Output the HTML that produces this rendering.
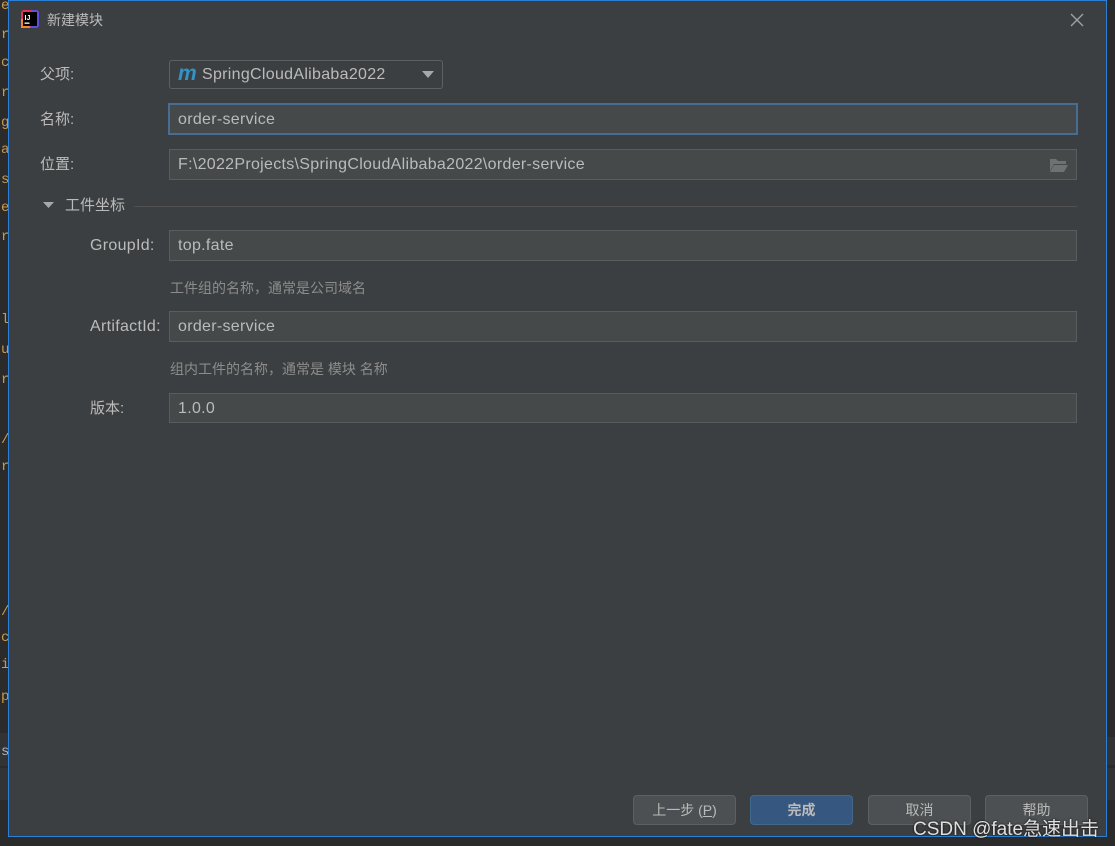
<!DOCTYPE html>
<html><head><meta charset="utf-8"><style>
*{margin:0;padding:0;box-sizing:border-box}
body{width:1115px;height:846px;background:#2b2b2b;position:relative;overflow:hidden;font-family:"Liberation Sans","Noto Sans CJK SC",sans-serif;color:#bbbbbb;font-size:15px}
.abs{position:absolute}
.code{position:absolute;left:1px;font-family:"Liberation Mono",monospace;font-size:14px;color:#cc9a4a;line-height:16px}
.dlg{position:absolute;left:8px;top:0;width:1099px;height:837px;background:#3c3f41;border:1px solid #2b7fd6}
.lbl{position:absolute;font-size:15px;color:#bbbbbb;line-height:18px}
.en{font-size:16px;letter-spacing:0.3px}
.fld{position:absolute;background:#45494a;border:1px solid #5a5d5f;color:#bbbbbb;font-size:16px;letter-spacing:0.3px;padding-left:8px;line-height:29px}
.hint{position:absolute;font-size:14px;color:#8c8c8c}
.btn{position:absolute;top:794px;height:30px;border:1px solid #5e6060;border-radius:4px;background:#4c5052;color:#bbbbbb;font-size:14px;text-align:center;line-height:28px}
</style></head><body>
<div class="code" style="top:-2px">e</div><div class="code" style="top:27px">r</div><div class="code" style="top:55px">c</div><div class="code" style="top:85px">r</div><div class="code" style="top:115px">g</div><div class="code" style="top:142px">a</div><div class="code" style="top:172px">s</div><div class="code" style="top:200px">e</div><div class="code" style="top:229px">r</div><div class="code" style="top:312px">l</div><div class="code" style="top:342px">u</div><div class="code" style="top:372px">r</div><div class="code" style="top:432px">/</div><div class="code" style="top:459px">r</div><div class="code" style="top:604px">/</div><div class="code" style="top:630px">c</div><div class="code" style="top:657px">i</div><div class="code" style="top:689px">p</div>
<div class="abs" style="left:0;top:733px;width:8px;height:33px;background:#313335"></div>
<div class="code" style="top:744px;color:#a9b7c6">s</div>
<div class="abs" style="left:0;top:768px;width:8px;height:32px;background:#313335"></div>
<div class="abs" style="left:1107px;top:737px;width:8px;height:28px;background:#313335"></div>
<div class="abs" style="left:1107px;top:768px;width:8px;height:32px;background:#313335"></div>
<div class="dlg">
<svg class="abs" style="left:11px;top:8px" width="20" height="20" viewBox="0 0 20 20"><rect x="1" y="1" width="18" height="18" rx="3" fill="#e5335b"/><rect x="10" y="1" width="9" height="18" rx="3" fill="#5a4fe0"/><rect x="1" y="10" width="9" height="9" fill="#f5872a"/><rect x="3" y="3" width="14" height="14" fill="#000"/><text x="4.5" y="11" font-size="7" fill="#fff" font-family="Liberation Sans" font-weight="bold">IJ</text><rect x="4.5" y="13.5" width="5" height="1.3" fill="#fff"/></svg>
<div class="lbl" style="left:38px;top:10px;font-size:14px">新建模块</div>
<svg class="abs" style="left:1061px;top:12px" width="14" height="14"><path d="M1 1L13 13M13 1L1 13" stroke="#a0a0a0" stroke-width="1.4"/></svg>
<div class="lbl" style="left:31px;top:65px">父项:</div>
<div class="abs" style="left:160px;top:59px;width:274px;height:29px;border:1px solid #5e6060;border-radius:3px;background:#3c3f41"></div>
<div class="abs" style="left:169px;top:61px;font-size:21px;font-style:italic;font-weight:bold;color:#3592c4;font-family:'Liberation Sans',sans-serif">m</div>
<div class="lbl en" style="left:193px;top:65px">SpringCloudAlibaba2022</div>
<svg class="abs" style="left:413px;top:70px" width="12" height="8"><path d="M0 0H12L6 7Z" fill="#a8a8a8"/></svg>
<div class="lbl" style="left:31px;top:110px">名称:</div>
<div class="fld" style="left:159px;top:102px;width:910px;height:32px;border:2px solid #466d94;line-height:29px">order-service</div>
<div class="lbl" style="left:31px;top:155px">位置:</div>
<div class="fld" style="left:160px;top:148px;width:908px;height:31px">F:\2022Projects\SpringCloudAlibaba2022\order-service</div>
<svg class="abs" style="left:1040px;top:156px" width="20" height="16"><path d="M1 2H7L9 4H17V7H5L1 14Z" fill="#6e7273"/><path d="M5 8H19L15 15H1Z" fill="#6e7273"/></svg>
<svg class="abs" style="left:34px;top:201px" width="12" height="8"><path d="M0 0H11L5.5 6Z" fill="#a8a8a8"/></svg>
<div class="lbl" style="left:56px;top:196px">工件坐标</div>
<div class="abs" style="left:125px;top:205px;width:943px;height:1px;background:#515151"></div>
<div class="lbl en" style="left:81px;top:236px">GroupId:</div>
<div class="fld" style="left:160px;top:229px;width:908px;height:31px">top.fate</div>
<div class="hint" style="left:161px;top:277px">工件组的名称，通常是公司域名</div>
<div class="lbl en" style="left:81px;top:317px">ArtifactId:</div>
<div class="fld" style="left:160px;top:310px;width:908px;height:31px">order-service</div>
<div class="hint" style="left:161px;top:358px">组内工件的名称，通常是 模块 名称</div>
<div class="lbl" style="left:81px;top:399px">版本:</div>
<div class="fld" style="left:160px;top:392px;width:908px;height:30px">1.0.0</div>
<div class="btn" style="left:624px;width:103px">上一步 (<u>P</u>)</div>
<div class="btn" style="left:741px;width:103px;background:#365880;border-color:#43688e;font-weight:bold">完成</div>
<div class="btn" style="left:859px;width:103px">取消</div>
<div class="btn" style="left:976px;width:103px">帮助</div>
</div>
<div class="abs" style="left:913px;top:814px;font-size:19px;color:#e0e0e0;text-shadow:0 0 2px #000">CSDN @fate急速出击</div>
</body></html>
